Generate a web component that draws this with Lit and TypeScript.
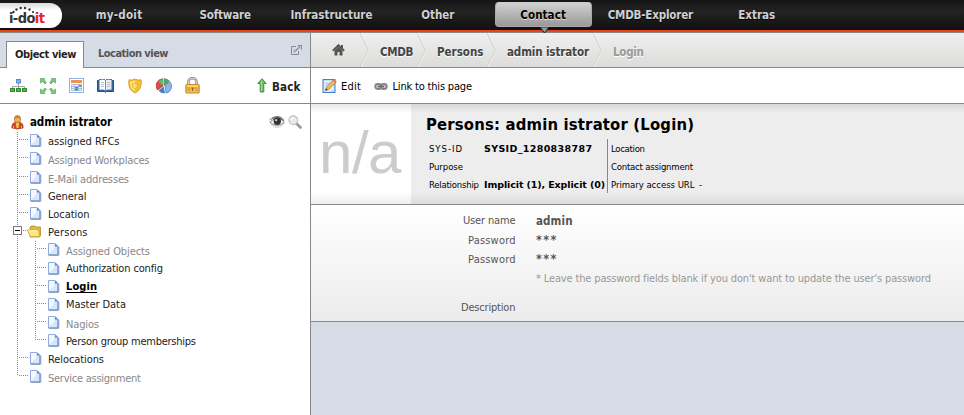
import { LitElement, html, css, svg } from "lit";
import { customElement, property } from "lit/decorators.js";
import { classMap } from "lit/directives/class-map.js";

/** A single-line label whose tracking is tuned so that it fills a given width. */
@customElement("fit-label")
class FitLabel extends LitElement {
  @property() text = "";
  @property({ type: Number }) w = 0;

  static styles = css`
    :host { display: inline-block; white-space: nowrap; flex: none; transform: translateY(1px); }
    span { display: inline-block; }
  `;

  firstUpdated() {
    const span = this.renderRoot.querySelector("span") as HTMLElement;
    const natural = span.getBoundingClientRect().width;
    const gaps = this.text.length - 1;
    if (gaps > 0) span.style.letterSpacing = `${(this.w + 1.5 - natural) / gaps}px`;
    this.style.width = `${this.w + 1}px`;
  }

  render() {
    return html`<span>${this.text}</span>`;
  }
}

const label = (text: string, w: number) => html`<fit-label .text=${text} .w=${w}></fit-label>`;

interface Row {
  text: string;
  w: number;
  muted?: boolean;
  tall?: boolean;
  raised?: boolean;
  folder?: boolean;
  current?: boolean;
  children?: Row[];
}

const ROWS: Row[] = [
  { text: "assigned RFCs", w: 70 },
  { text: "Assigned Workplaces", w: 100, muted: true, tall: true },
  { text: "E-Mail addresses", w: 79.5, muted: true },
  { text: "General", w: 37 },
  { text: "Location", w: 40 },
  {
    text: "Persons", w: 38, folder: true,
    children: [
      { text: "Assigned Objects", w: 82.5, muted: true, tall: true },
      { text: "Authorization config", w: 95.5, raised: true },
      { text: "Login", w: 29.5, raised: true, current: true },
      { text: "Master Data", w: 58.5, raised: true },
      { text: "Nagios", w: 31.5, muted: true },
      { text: "Person group memberships", w: 128.5 },
    ],
  },
  { text: "Relocations", w: 54.5 },
  { text: "Service assignment", w: 91.5, muted: true },
];

const NAV: [string, number][] = [
  ["my-doit", 45], ["Software", 50], ["Infrastructure", 80.5], ["Other", 31.5],
  ["Contact", 44], ["CMDB-Explorer", 84], ["Extras", 35.5],
];

const icon = (w: number, h: number, body: unknown) =>
  html`<svg width=${w} height=${h} viewBox="0 0 ${w} ${h}">${body}</svg>`;

const docIcon = () => icon(13, 15, svg`
  <path d="M2.500 2.500h7l3 3v8.500h-10z" fill="#8d97b8" opacity=".5"/>
  <path d="M1.500 1.500h6.500l3 3v8.500H1.500z" fill="#d4e7fc" stroke="#8fabdf"/>
  <path d="M2 2h5v5L2 12z" fill="#fff" opacity=".7"/>
  <path d="M11 4.500v8.500H1.500" fill="none" stroke="#7288be"/>
  <path d="M8 1.500v3h3z" fill="#5a80cc"/>`);

const folderIcon = () => icon(15, 13, svg`
  <path d="M3 3V2l1-1h4l1 1h4.500v9L12 12H3z" fill="#e2b83a" stroke="#b98f1f" stroke-width=".8"/>
  <path d="M.5 5h10l1.500 1 .5 5.500H3.200z" fill="#fbe684" stroke="#cfa52b" stroke-width=".8"/>
  <path d="M1.500 5.800h9" stroke="#fff7c5"/>`);

const treeIcon = () => icon(17, 16, svg`
  <path d="M8.500 5v4M2.500 11V8.500h12V11M8.500 8v3" fill="none" stroke="#9aa8b2"/>
  <rect x="6.500" y="1.500" width="4" height="3.500" fill="#7fb0ea" stroke="#5c8ed2"/>
  <g fill="#5cae4a" stroke="#378a2e"><rect x=".5" y="10.500" width="4" height="3"/><rect x="6.500" y="10.500" width="4" height="3"/><rect x="12.500" y="10.500" width="4" height="3"/></g>`);

const expandIcon = () => icon(18, 18, svg`
  <g fill="#7cc47c" stroke="#5aa860" stroke-width=".7">
  <path d="M1.500 1.500H6L5 2.800l2.500 2.700L6 7 3.500 4.500 1.500 6z"/><path d="M16.500 1.500H12l1 1.300-2.500 2.700L12 7l2.500-2.500 2 1.500z"/>
  <path d="M1.500 16.500H6l-1-1.300 2.500-2.700L6 11l-2.500 2.500-2-1.500z"/><path d="M16.500 16.500H12l1-1.300-2.500-2.700L12 11l2.500 2.500 2-1.500z"/></g>`);

const calendarIcon = () => icon(15, 15, svg`
  <rect x=".5" y=".5" width="14" height="14" fill="#fff" stroke="#8fb2e6"/>
  <path d="M2 2h11v3H2z" fill="#f0924c"/>
  <path d="M2.500 6.500h10v6h-10z" fill="#e9f1fc" stroke="#a9c0e4"/>
  <path d="M2 8.500h11M2 10.500h11M5.500 6v7M9.500 6v7" stroke="#a9c0e4"/>
  <path d="M6 9h3v1.500H6zM10 7h2.500v1.500H10zM6 11h3v1.500H6z" fill="#4d9c5c"/>`);

const bookIcon = () => icon(17, 16, svg`
  <path d="M.5 2.500h2v-1h5l1 1 1-1h5v1h2v11h-7l-1 1-1-1h-7z" fill="#3467a0" stroke="#264f83"/>
  <path d="M2.500 2q4-1.200 6 .8v9.700q-2-1.500-6-.8z" fill="#fff"/>
  <path d="M14.500 2q-4-1.200-6 .8v9.700q2-1.500 6-.8z" fill="#e8eef6"/>
  <path d="M4 4.500h3M4 6.500h3M4 8.500h3M10 4.500h3M10 6.500h3M10 8.500h3" stroke="#b5c1ce"/>
  <path d="M8.500 2.500v10" stroke="#718aa8"/>`);

const shieldIcon = () => icon(14, 16, svg`
  <path d="M7 1q-3 2-6 .8Q-.5 11.500 7 15q7.500-3.500 6-13.200Q10 3 7 1z" fill="#f6c437" stroke="#dc9c20"/>
  <path d="M7 2.500Q4.500 4 2.200 3.500 1.800 10.500 7 13.500z" fill="#fde88a"/>
  <path d="M7 5Q4.500 6 4 6q.2 3.500 3 5.500Q9.800 9.500 10 6 9 6 7 5z" fill="#ffe05e" stroke="#dda227" stroke-width=".8"/>`);

const pieIcon = () => icon(16, 16, svg`
  <path d="M7 8V.8A7 7 0 0 0 1.500 12z" fill="#e2484c" stroke="#b92f34" stroke-width=".7"/>
  <path d="M7 7.500V.800A7 7 0 0 0 2.300 3.800z" fill="#62b96c"/>
  <path d="M8.500 7.500V.7a7 7 0 0 1 4.700 2.200z" fill="#50aa62" stroke="#338a49" stroke-width=".7"/>
  <path d="M9 8l4.700-4.500a7 7 0 0 1-3.700 11.700z" fill="#8cb4e6" stroke="#4e82c5" stroke-width=".7"/>
  <path d="M7.700 8.500L2.500 12.500A7 7 0 0 0 9 15.200z" fill="#447fc7"/>`);

const lockIcon = () => icon(15, 17, svg`
  <path d="M3.500 8V5a4 3.800 0 0 1 8 0v3" fill="none" stroke="#8c8c86" stroke-width="2.600"/>
  <path d="M3.500 8V5a4 3.800 0 0 1 8 0v3" fill="none" stroke="#dcdcd4"/>
  <rect x=".8" y="7.500" width="13.400" height="8.500" rx=".6" fill="#f6bd48" stroke="#c6862a"/>
  <path d="M2 9h11" stroke="#ffe6a0"/><path d="M2 11h3.500m4 0H13M2 13h3.500m4 0H13" stroke="#ce922e"/>
  <path d="M6.500 10.500h2v1.200l-.5.500V14H7v-1.800l-.5-.5z" fill="#8d6116"/>`);

const upIcon = () => icon(10, 15, svg`<path d="M5 .7L9.200 5.500H6.800V14H3.200V5.500H.8z" fill="#76bd67" stroke="#38863a" stroke-width=".9"/><path d="M4.500 3v10" stroke="#a9dba0"/>`);

const userIcon = () => icon(13, 15, svg`
  <path d="M.8 13Q.6 8 4 7.200h5Q12.400 8 12.200 13q-5.500 2-11.400 0z" fill="#cf4a20" stroke="#9b3c20" stroke-width=".6"/>
  <path d="M2.500 13.500V11M10.500 13.500V11" stroke="#e9a27c"/>
  <path d="M4.800 7.500h3.400l-.8 5.500H5.600z" fill="#f3d04c"/>
  <path d="M3.500 3.500Q3.500.6 6.500.6t3 2.900v2Q9 7.500 6.500 7.500t-3-2z" fill="#f0b056" stroke="#a9651f" stroke-width=".7"/>
  <path d="M3.600 3.600Q3.500.7 6.500.7t2.900 2.900Q7 2.200 3.600 3.600z" fill="#c5822f"/>`);

const eyeIcon = () => icon(18, 14, svg`
  <path d="M1 7q6-5.500 12-3 3 1.500 4 4-4 5.500-9.500 5Q3 11.500 1 7z" fill="#dcdcdc"/>
  <path d="M.8 5.500Q7-1 13 2q3 1.500 3.700 4.500Q9 .8.800 5.500z" fill="#777"/>
  <path d="M2 7q4-4 8-3.500 4 .5 6 4-3.500 3-7.500 2.700Q4.500 10 2 7z" fill="#fff" stroke="#666" stroke-width=".7"/>
  <circle cx="9.300" cy="6.300" r="3.700" fill="#333"/><circle cx="8.200" cy="5.200" r="1.100" fill="#ddd"/>`);

const magnifierIcon = () => icon(14, 14, svg`
  <path d="M8.500 8.500l4 4" stroke="#999" stroke-width="2.600" stroke-linecap="round"/>
  <circle cx="5.300" cy="5.300" r="4.300" fill="#eaeaea" stroke="#c2c2c2" stroke-width="1.300"/>
  <path d="M3 5q.3-2 2.500-2.300" fill="none" stroke="#fff" stroke-width="1.300"/>`);

const popupIcon = () => icon(11, 10, svg`
  <path d="M5 1.500H.5v8h7V6" fill="none" stroke="#858b93"/>
  <path d="M4 6.500l5-5M6.500.5h4v4" fill="none" stroke="#858b93" stroke-width="1.200"/>
  <path d="M2.500 4.500h2v3h-2z" fill="#a8afb8"/>`);

const homeIcon = () => icon(13, 12, svg`
  <path d="M2.500 6.500v5h3V8h2v3.500h3v-5l-4-4z" fill="#555"/>
  <path d="M.8 6.800l5.700-5.600 5.700 5.600" fill="none" stroke="#555" stroke-width="1.900"/><path d="M9 1h2v4L9 3z" fill="#555"/>`);

const editIcon = () => icon(15, 16, svg`
  <rect x="1" y="1.500" width="12" height="13" fill="#c4def8" stroke="#427fce"/>
  <path d="M2.500 3h9v8l-3 2.500h-6z" fill="#eef6ff"/><path d="M3.500 5h6M3.500 7h4" stroke="#9dbfe3"/>
  <path d="M4.300 9.200L11.500 1.800l2.500 2.400-7.300 7.400-3.400 1z" fill="#f4bd52" stroke="#a87528" stroke-width=".8"/>
  <path d="M11.500 1.800L14 4.200" stroke="#dc7770" stroke-width="2"/><path d="M3.200 12.600l1-2.300 1.600 1.500z" fill="#444"/>`);

const linkIcon = () => icon(14, 9, svg`
  <g fill="#c4c4c4" stroke="#858585" stroke-width="1.800"><rect x="1.200" y="2" width="6" height="5" rx="2.500"/><rect x="6.800" y="2" width="6" height="5" rx="2.500"/></g>
  <path d="M4 4.500h6" stroke="#666" stroke-width="1.500"/>`);

@customElement("app-root")
class AppRoot extends LitElement {
  static styles = css`
    :host {
      display: flex; flex-direction: column; width: 100%; height: 100vh; overflow: hidden;
      font: 11px/18px "DejaVu Sans Condensed", "DejaVu Sans", sans-serif; color: #222; background: #d5dce5;
    }
    * { box-sizing: border-box; }
    svg { display: block; flex: none; }

    .top {
      display: flex; flex: none; height: 33px; border-bottom: 1px solid #888;
      background: linear-gradient(#151515, #232323 35%, #101010 30px, #ee4318 30px);
    }
    .logo {
      width: 62px; height: 25px; margin-top: 3px; margin-right: 3.500px; padding: 6px 0 0 9px;
      border-radius: 0 12px 12px 0; background: linear-gradient(#d8d8d8, #fff 30%);
      color: #333; font-size: 14.500px; line-height: 18px; font-weight: bold; letter-spacing: -.6px;
      position: relative; flex: none; white-space: nowrap;
    }
    .logo em { color: #f0202a; font-style: normal; }
    .dots { position: absolute; left: 11px; top: 3px; }
    .nav-item {
      width: 106.300px; height: 30px; flex: none; display: flex; justify-content: center;
      padding-top: 5px; color: #d0d0d0; font-weight: bold; font-size: 11.500px; position: relative; text-shadow: 0 1px #000;
    }
    .nav-item.active { padding-top: 2px; color: #000; text-shadow: 0 1px #ddd; }
    .pill {
      width: 97px; height: 25px; padding: 2px 2px 0 0; display: flex; justify-content: center;
      border-radius: 4px; background: linear-gradient(#d0d0d0, #999); border: 1px solid #aaa; border-top-color: #ccc;
    }
    .pointer { position: absolute; top: 27px; left: 49px; z-index: 2; }

    .body { display: flex; flex: 1; min-height: 0; }
    .side { width: 311px; flex: none; border-right: 1px solid #888; background: #fff; display: flex; flex-direction: column; }
    .tabs { height: 35px; flex: none; display: flex; background: #d5dce5; box-shadow: inset 0 -1px #888; padding-left: 6px; }
    .tab { width: 78px; height: 27px; margin-top: 8px; border: 1px solid #888; border-bottom: 0; background: #fff; padding: 2px 0 0 8px; font-weight: bold; line-height: 20px; }
    .tab-off { padding: 11px 0 0 14px; font-weight: bold; color: #555; width: 207px; }
    .tabs svg { margin-top: 12px; }
    .tools { height: 36px; flex: none; border-bottom: 1px solid #888; display: flex; align-items: center; padding-left: 4px; }
    .tool { width: 29px; display: flex; justify-content: center; }
    .back { display: flex; align-items: center; margin-left: 50px; gap: 5px; font-weight: bold; font-size: 11.500px; }
    .person { display: flex; height: 28px; flex: none; padding: 11px 0 0 11px; }
    .person .name { margin-left: 6px; width: 238px; font-weight: bold; font-size: 11.500px; color: #000; line-height: 13px; }
    .person .mag { margin-left: 2px; }

    .branch { display: flex; flex-direction: column; margin-left: 17px; position: relative; }
    .branch .branch { margin-left: 18px; }
    .rail {
      position: absolute; left: 0; top: 0; bottom: 10px; width: 1px;
      background: repeating-linear-gradient(#888 0 1px, transparent 1px 2px);
    }
    .row { display: flex; height: 18px; }
    .row.tall { height: 19px; }
    .row.muted { color: #888; }
    .twig { width: 9px; height: 1px; margin: 7px 2px 0 2px; flex: none; background: repeating-linear-gradient(90deg, #888 0 1px, transparent 1px 2px); }
    .row svg { margin: 1px 2px 0 -1px; }
    .row .text { margin-left: 4px; }
    .row.folder svg { margin: 2px 2px 0 -3px; }
    .muted .text { padding-top: 1px; }
    .raised .text { margin-top: -1px; }
    .current .text { font-weight: bold; color: #000; border-bottom: 1px solid #000; height: 16px; line-height: 18px; }
    .toggle {
      position: absolute; width: 9px; height: 9px; left: -4px; margin-top: 3px; border: 1px solid #777; background: #fff; z-index: 1;
      display: flex; align-items: center; justify-content: center;
    }
    .toggle i { width: 5px; height: 1px; background: #000; }

    .main { flex: 1; min-width: 0; display: flex; flex-direction: column; }
    .crumbs { height: 35px; flex: none; display: flex; border-bottom: 1px solid #888; background: linear-gradient(#efefef, #dcdcda); font-weight: bold; font-size: 11.500px; color: #444; text-shadow: 0 1px #fff; }
    .crumb { display: flex; justify-content: space-between; padding: 9px 0 0 10px; }
    .crumb .chev { margin-top: -9px; }
    .crumb.home { width: 59px; padding-left: 21px; }
    .crumb.home svg:first-child { margin-top: 2px; }
    .w57 { width: 57px; } .w70 { width: 70px; } .w106 { width: 106px; }
    .crumb.last { color: #999; }
    .actions { height: 36px; flex: none; display: flex; align-items: center; border-bottom: 1px solid #888; background: #fff; padding-left: 11px; color: #000; }
    .actions .edit { margin: 0 13px 0 4px; }
    .actions .link { margin: 0 0 0 5px; }
    .actions .chain { margin-top: 2px; }

    .head { height: 101px; flex: none; display: flex; border-bottom: 1px solid #888; background: #ededed; position: relative; color: #000; }
    .shade { position: absolute; inset: 0; background: linear-gradient(rgba(0,0,0,.09), transparent 9px, transparent 88px, rgba(0,0,0,.07)); }
    .photo { width: 100px; background: #fff; color: #ccc; font: 60px/94px "Liberation Sans", Arial, sans-serif; padding: 1px 0 0 8px; }
    .info { padding: 9px 0 0 15px; }
    .title { font-size: 16.500px; line-height: 22px; font-weight: bold; height: 26px; }
    .facts { display: flex; font-size: 9.500px; }
    .col { display: flex; flex-direction: column; height: 54px; }
    .col span { height: 18px; }
    .names { width: 58px; padding-left: 3px; }
    .values { width: 123px; font-weight: bold; font-family: "DejaVu Sans", sans-serif; }
    .more { border-left: 1px solid #888; padding-left: 3px; }
    .dash { margin-left: 5px; }

    .form { height: 117px; flex: none; border-bottom: 1px solid #888; background: linear-gradient(#fff, #ececec); padding-top: 6px; color: #555; }
    .field { display: flex; height: 19px; }
    .field.first { height: 20px; }
    .field.hint { height: 29px; color: #999; }
    .field .caption { width: 204px; display: flex; justify-content: flex-end; margin-right: 21px; }
    .field .value { font-weight: bold; font-size: 11.500px; }
    .field .stars { font-size: 12.500px; line-height: 15px; }
  `;

  row(r: Row): unknown {
    return html`
      <div class=${classMap({ row: true, muted: !!r.muted, tall: !!r.tall, raised: !!r.raised, folder: !!r.folder, current: !!r.current })}>
        ${r.folder ? html`<div class="toggle"><i></i></div>` : ""}
        <div class="twig"></div>
        ${r.folder ? folderIcon() : docIcon()}
        <div class="text">${label(r.text, r.w)}</div>
      </div>
      ${r.children ? html`<div class="branch"><div class="rail"></div>${r.children.map((c) => this.row(c))}</div>` : ""}
    `;
  }

  chevron() {
    return html`<svg class="chev" width="10" height="34" viewBox="0 0 10 34"><path d="M1 0l8 17-8 17" fill="none" stroke="#fff" stroke-width="1"/><path d="M0 0l8.500 17L0 34" fill="none" stroke="#d2d2d2" stroke-width="1.200"/></svg>`;
  }

  render() {
    return html`
      <div class="top">
        <div class="logo">
          <svg class="dots" width="26" height="8" viewBox="0 0 26 8"><g fill="#333"><circle cx="2.500" cy="6" r="1.200"/><circle cx="5.500" cy="3.500" r="1.200"/><circle cx="9.700" cy="2" r="1.200"/><circle cx="14" cy="2" r="1.200"/><circle cx="18.500" cy="3.500" r="1.200"/><circle cx="22" cy="6" r="1.100"/></g></svg>
          i-do<em>it</em>
        </div>
        ${NAV.map(([text, w]) => text === "Contact"
          ? html`<div class="nav-item active"><div class="pill">${label(text, w)}</div>
              <svg class="pointer" width="9" height="7" viewBox="0 0 9 7"><path d="M0 0l4.500 6L9 0z" fill="#999" stroke="#222"/></svg></div>`
          : html`<div class="nav-item">${label(text, w)}</div>`)}
      </div>
      <div class="body">
        <div class="side">
          <div class="tabs">
            <div class="tab">${label("Object view", 60)}</div>
            <div class="tab-off">${label("Location view", 69)}</div>
            ${popupIcon()}
          </div>
          <div class="tools">
            ${[treeIcon, expandIcon, calendarIcon, bookIcon, shieldIcon, pieIcon, lockIcon].map((i) => html`<div class="tool">${i()}</div>`)}
            <div class="back">${upIcon()}${label("Back", 27)}</div>
          </div>
          <div class="person">
            ${userIcon()}<div class="name">${label("admin istrator", 80.5)}</div>${eyeIcon()}<div class="mag">${magnifierIcon()}</div>
          </div>
          <div class="branch"><div class="rail"></div>${ROWS.map((r) => this.row(r))}</div>
        </div>
        <div class="main">
          <div class="crumbs">
            <div class="crumb home">${homeIcon()}${this.chevron()}</div>
            <div class="crumb w57">${label("CMDB", 32)}${this.chevron()}</div>
            <div class="crumb w70">${label("Persons", 45)}${this.chevron()}</div>
            <div class="crumb w106">${label("admin istrator", 80.5)}${this.chevron()}</div>
            <div class="crumb last">${label("Login", 29.5)}</div>
          </div>
          <div class="actions">
            ${editIcon()}<div class="edit">${label("Edit", 18.5)}</div>
            <div class="chain">${linkIcon()}</div><div class="link">${label("Link to this page", 78)}</div>
          </div>
          <div class="head">
            <div class="photo">${label("n/a", 81)}</div>
            <div class="info">
              <div class="title">${label("Persons: admin istrator (Login)", 266.5)}</div>
              <div class="facts">
                <div class="col names"><span>${label("SYS-ID", 31.5)}</span><span>${label("Purpose", 32.5)}</span><span>${label("Relationship", 48.5)}</span></div>
                <div class="col values"><span>${label("SYSID_1280838787", 106.5)}</span><span></span><span>${label("Implicit (1), Explicit (0)", 119.5)}</span></div>
                <div class="col more"><span>${label("Location", 32.5)}</span><span>${label("Contact assignment", 80.5)}</span><span>${label("Primary access URL", 82)}<span class="dash">${label("-", 4)}</span></span></div>
              </div>
            </div>
            <div class="shade"></div>
          </div>
          <div class="form">
            <div class="field first"><div class="caption">${label("User name", 51)}</div><div class="value">${label("admin", 35)}</div></div>
            <div class="field"><div class="caption">${label("Password", 46)}</div><div class="value stars">${label("***", 19)}</div></div>
            <div class="field"><div class="caption">${label("Password", 46)}</div><div class="value stars">${label("***", 19)}</div></div>
            <div class="field hint"><div class="caption"></div><div>${label("* Leave the password fields blank if you don't want to update the user's password", 393.5)}</div></div>
            <div class="field"><div class="caption">${label("Description", 53)}</div></div>
          </div>
        </div>
      </div>
    `;
  }
}
